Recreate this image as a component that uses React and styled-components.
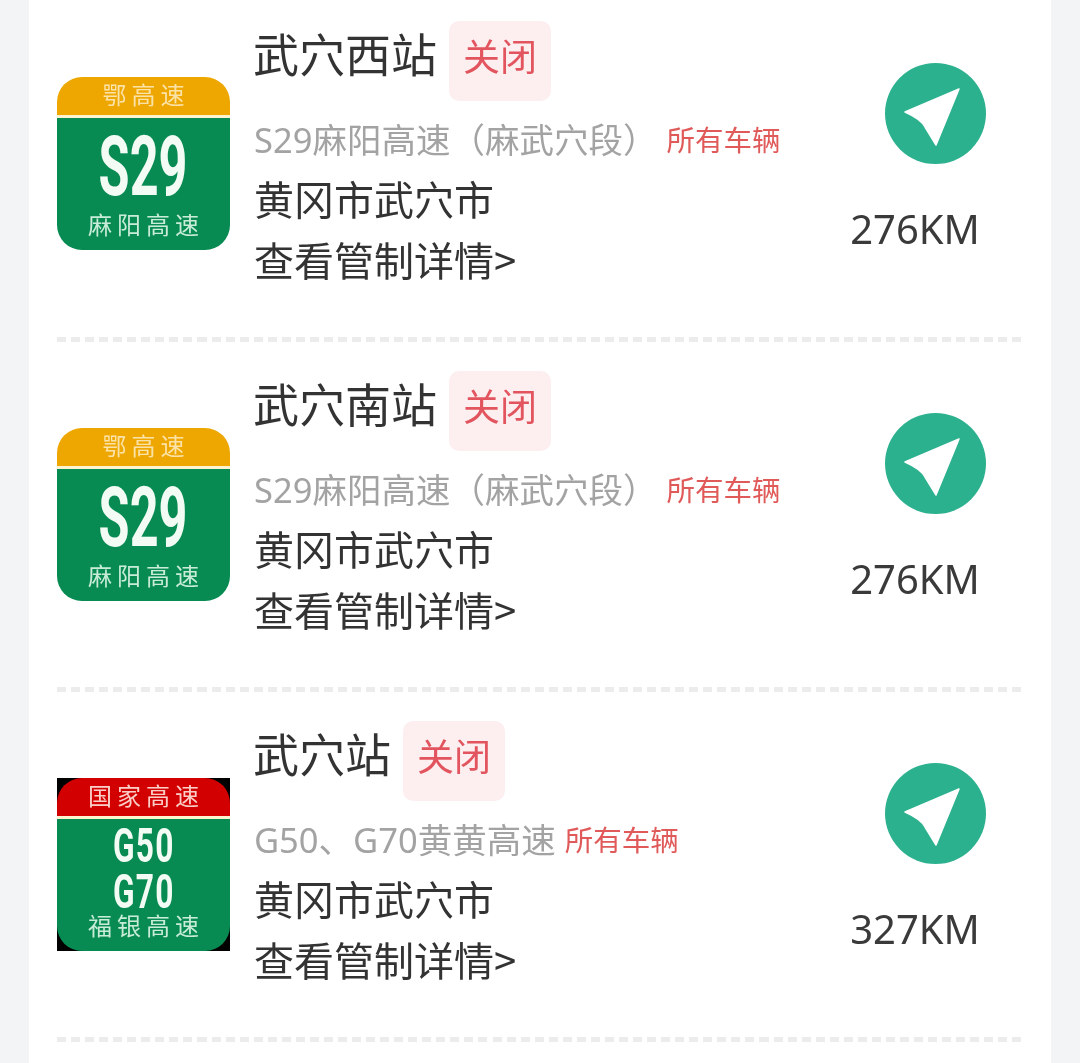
import styled, { createGlobalStyle } from "styled-components";

const GlobalStyle = createGlobalStyle`
  html, body {
    margin: 0;
    padding: 0;
    height: 100%;
    overflow: hidden;
    background-color: #f3f4f6;
    font-family: "Noto Sans", "Noto Sans CJK SC", sans-serif;
  }
`;

const Card = styled.div`
  margin: 0 29px;
  height: 1063px;
  background-color: #fff;
  overflow: hidden;
  filter: blur(0.4px);
`;

const Sign = styled.div`
  flex: none;
  width: 173px;
  height: 173px;
  margin-top: 57px;
  background-color: ${(props) => (props.$square ? "#000" : "transparent")};
`;

const Row = styled.div`
  display: flex;
  align-items: flex-start;
  margin: 0 28px 0;
  padding-top: 29px;
  height: 316px;

  &:first-child {
    padding-top: 21px;
  }

  &:first-child ${Sign} {
    margin-top: 56px;
  }
`;

const Divider = styled.div`
  margin: 0 29px 0 28px;
  height: 5px;
  background: repeating-linear-gradient(to right, #ececec 0, #ececec 9px, transparent 9px, transparent 14.05px);
`;

const SignInner = styled.div`
  display: flex;
  flex-direction: column;
  height: 100%;
  border-radius: 25px;
  overflow: hidden;
`;

const SignTop = styled.div`
  flex: none;
  height: 34px;
  padding: 0 0 4px 5px;
  display: flex;
  align-items: center;
  justify-content: center;
  background-color: ${(props) => props.$color};
  color: ${(props) => props.$text};
  border-bottom: 3px solid #fdf3cf;
  font-family: "Noto Sans CJK SC", sans-serif;
  font-size: 24px;
  letter-spacing: 5px;
  line-height: 1;
`;

const SignBody = styled.div`
  flex: 1;
  display: flex;
  flex-direction: column;
  align-items: center;
  justify-content: flex-end;
  padding-bottom: 11px;
  background-color: #078b52;
  color: #f2fbf4;
`;

const RoadNumber = styled.div`
  font-family: Roboto, "Liberation Sans", sans-serif;
  font-weight: 700;
  white-space: pre-line;
  text-align: center;
  font-size: ${(props) => (props.$small ? "48px" : "84px")};
  line-height: ${(props) => (props.$small ? "46px" : "70px")};
  letter-spacing: ${(props) => (props.$small ? "2px" : "0")};
  transform: scaleX(${(props) => (props.$small ? 0.66 : 0.6)});
  margin-bottom: ${(props) => (props.$small ? "-5px" : "7px")};
`;

const RoadName = styled.div`
  padding-left: 5px;
  font-family: "Noto Sans CJK SC", sans-serif;
  font-size: 24px;
  line-height: 30px;
  letter-spacing: 5px;
  color: #c8ecd8;
`;

const Info = styled.div`
  flex: 1;
  min-width: 0;
  margin-left: 24px;
`;

const TitleLine = styled.div`
  display: flex;
  align-items: flex-start;
  height: 87px;
`;

const Title = styled.div`
  font-family: "Noto Sans CJK SC", sans-serif;
  font-size: 46px;
  line-height: 62px;
  margin-left: -1px;
  color: #333;
`;

const Tag = styled.div`
  width: 102px;
  height: 80px;
  margin-left: 12px;
  padding-bottom: 11px;
  box-sizing: border-box;
  display: flex;
  align-items: center;
  justify-content: center;
  border-radius: 10px;
  background-color: #fdeff0;
  color: #e2555f;
  font-family: "Noto Sans CJK SC", sans-serif;
  font-size: 37px;
  line-height: 1;
`;

const RoadLine = styled.div`
  display: flex;
  align-items: center;
  height: 60px;
  white-space: nowrap;
`;

const RoadText = styled.span`
  font-family: "Noto Sans", "Noto Sans CJK SC", sans-serif;
  font-size: 34.5px;
  color: #a3a3a3;
`;

const Vehicles = styled.span`
  margin-left: 9px;
  font-family: "Noto Sans CJK SC", sans-serif;
  font-size: 28.5px;
  color: #e05a5a;
`;

const TextLine = styled.div`
  font-family: "Noto Sans CJK SC", sans-serif;
  font-size: 40px;
  line-height: 60px;
  height: 60.5px;
  color: #333;
`;

const Side = styled.div`
  flex: none;
  width: 148px;
  margin-right: 14px;
  display: flex;
  flex-direction: column;
  align-items: center;
  padding-top: 42px;
`;

const NavIcon = styled.svg`
  display: block;
  width: 101px;
  height: 101px;
`;

const Distance = styled.div`
  margin: 40px 40px 0 0;
  font-family: "Noto Sans", sans-serif;
  font-size: 40px;
  line-height: 50px;
  color: #3a3a3a;
`;

const stations = [
  {
    name: "武穴西站",
    band: "鄂高速",
    bandColor: "#eea700",
    bandText: "#fbe3a8",
    number: "S29",
    roadName: "麻阳高速",
    road: "S29麻阳高速（麻武穴段）",
    distance: "276KM",
  },
  {
    name: "武穴南站",
    band: "鄂高速",
    bandColor: "#eea700",
    bandText: "#fbe3a8",
    number: "S29",
    roadName: "麻阳高速",
    road: "S29麻阳高速（麻武穴段）",
    distance: "276KM",
  },
  {
    name: "武穴站",
    band: "国家高速",
    bandColor: "#d20000",
    bandText: "#fbcfc8",
    number: "G50\nG70",
    small: true,
    roadName: "福银高速",
    road: "G50、G70黄黄高速",
    distance: "327KM",
    square: true,
  },
];

const NavButton = () => (
  <NavIcon viewBox="0 0 101 101">
    <circle cx="50.5" cy="50.5" r="50.5" fill="#2cb18f" />
    <path d="M74 26 L20 49 Q36 56 40 64 L51 82 Z" fill="#fff" stroke="#fff" strokeWidth="1.5" strokeLinejoin="round" />
  </NavIcon>
);

const StationRow = ({ station }) => (
  <>
    <Row>
      <Sign $square={station.square}>
        <SignInner>
          <SignTop $color={station.bandColor} $text={station.bandText}>{station.band}</SignTop>
          <SignBody>
            <RoadNumber $small={station.small}>{station.number}</RoadNumber>
            <RoadName>{station.roadName}</RoadName>
          </SignBody>
        </SignInner>
      </Sign>
      <Info>
        <TitleLine>
          <Title>{station.name}</Title>
          <Tag>关闭</Tag>
        </TitleLine>
        <RoadLine>
          <RoadText>{station.road}</RoadText>
          <Vehicles>所有车辆</Vehicles>
        </RoadLine>
        <TextLine>黄冈市武穴市</TextLine>
        <TextLine>查看管制详情&gt;</TextLine>
      </Info>
      <Side>
        <NavButton />
        <Distance>{station.distance}</Distance>
      </Side>
    </Row>
    <Divider />
  </>
);

const App = () => {
  return (
    <>
      <GlobalStyle />
      <Card>
        {stations.map((s) => (
          <StationRow key={s.name} station={s} />
        ))}
      </Card>
    </>
  );
};

export default App;
